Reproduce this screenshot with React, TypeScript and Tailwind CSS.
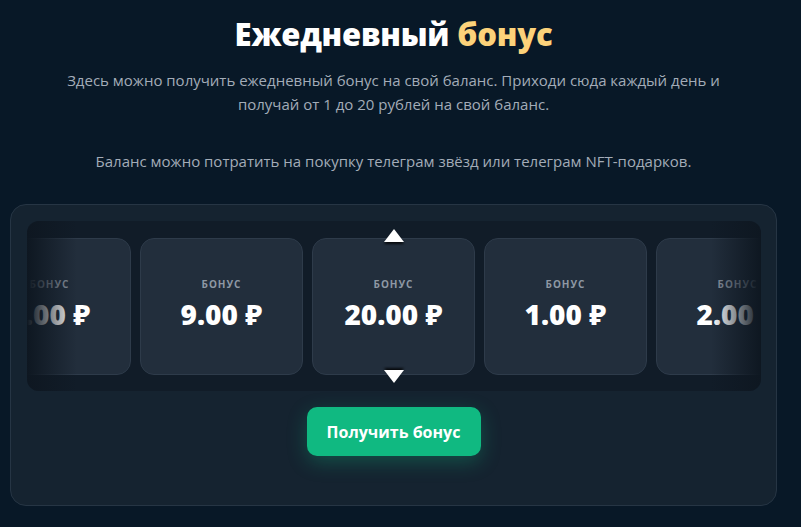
import React from "react";

const cards = [
  { v: "8.00" },
  { v: "9.00" },
  { v: "20.00" },
  { v: "1.00" },
  { v: "2.00" },
];

export default function App() {
  return (
    <div
      className="w-[801px] h-[527px] bg-[#081827] overflow-hidden"
      style={{ fontFamily: '"Open Sans", "Noto Sans", sans-serif' }}
    >
      <div className="w-[787px] flex flex-col items-center">
        <h1 className="mt-[14px] text-[31px] leading-[40px] font-extrabold text-white tracking-[-0.2px]">
          Ежедневный <span className="text-[#fcd27a]">бонус</span>
        </h1>
        <p className="mt-[14px] text-[15px] leading-[24px] text-[#a3acb8] text-center w-[700px]">
          Здесь можно получить ежедневный бонус на свой баланс. Приходи сюда каждый день и
          получай от 1 до 20 рублей на свой баланс.
        </p>
        <p className="mt-[33px] text-[15px] leading-[24px] text-[#a3acb8] text-center">
          Баланс можно потратить на покупку телеграм звёзд или телеграм NFT-подарков.
        </p>

        <div className="mt-[31px] w-[767px] h-[302px] rounded-[16px] border border-[#263544] bg-[#152330] flex flex-col items-center pt-[16px]">
          <div className="relative w-[734px] h-[170px] rounded-[12px] bg-[#111c28] overflow-hidden flex items-center justify-center">
            <div className="flex gap-[9px] shrink-0">
              {cards.map((c, i) => (
                <div
                  key={i}
                  className="w-[163px] h-[137px] shrink-0 rounded-[14px] border border-[#2e3b4a] bg-[#222e3c] flex flex-col items-center pt-[38px]"
                >
                  <div className="text-[10px] leading-[14px] font-bold tracking-[1px] text-[#8e98a4]">
                    БОНУС
                  </div>
                  <div className="mt-[5px] text-[28px] leading-[36px] font-extrabold text-white">
                    {c.v} ₽
                  </div>
                </div>
              ))}
            </div>
            <div className="absolute left-0 top-0 bottom-0 w-[50px] bg-gradient-to-r from-[#0e1721] to-transparent" />
            <div className="absolute right-0 top-0 bottom-0 w-[50px] bg-gradient-to-l from-[#0e1721] to-transparent" />
            <svg className="absolute left-1/2 -translate-x-1/2 top-[8px] drop-shadow-[0_2px_1px_rgba(0,0,0,0.8)]" width="20" height="13" viewBox="0 0 20 13">
              <polygon points="10,0 20,13 0,13" fill="#ffffff" />
            </svg>
            <svg className="absolute left-1/2 -translate-x-1/2 top-[149px] drop-shadow-[0_-2px_1px_rgba(0,0,0,0.8)]" width="20" height="13" viewBox="0 0 20 13">
              <polygon points="0,0 20,0 10,13" fill="#ffffff" />
            </svg>
          </div>
          <button className="mt-[16px] w-[174px] h-[49px] rounded-[10px] bg-[#10b981] text-white text-[16px] font-bold shadow-[0_6px_20px_rgba(16,185,129,0.3)]">
            Получить бонус
          </button>
        </div>
      </div>
    </div>
  );
}
